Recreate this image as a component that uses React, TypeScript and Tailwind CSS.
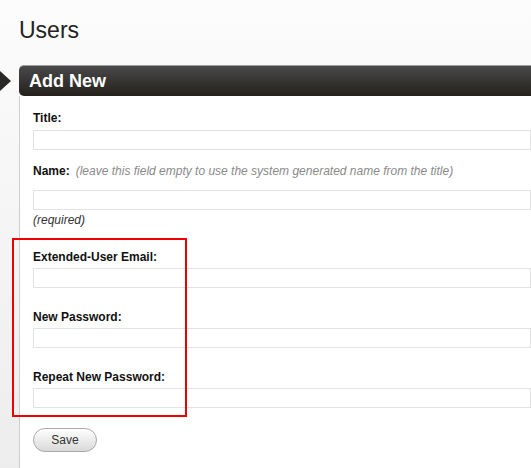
export default function App() {
    const fieldLabel = 'block h-[14px] text-[12px] leading-[14px] font-bold text-[#111]';
    const fieldInput = 'block w-full h-[20px] border border-[#e2e2e2] bg-white outline-none';

    return (
        <div
            className="relative flex h-[468px] w-[531px] flex-col overflow-hidden bg-gradient-to-b from-[#fcfcfc] to-[#ededed]"
            style={{ fontFamily: '"Liberation Sans", Arial, sans-serif' }}
        >
            {/* Page title */}
            <h1 className="mt-[17px] pl-[19px] text-[23px] leading-[26px] font-normal text-[#222]">Users</h1>

            {/* Pointer arrow */}
            <div className="absolute left-0 top-[71px] h-0 w-0 border-y-[10px] border-l-[11px] border-y-transparent border-l-[#2a2826]" />

            {/* Panel */}
            <div className="ml-[19px] mt-[22px] flex flex-1 flex-col">
                <div className="h-[31px] rounded-l-[5px] border-t border-[#9c9c9c] bg-gradient-to-b from-[#4a4a4a] to-[#24211d] pl-[10px] text-[18px] leading-[30px] font-bold text-white">
                    Add New
                </div>

                <div className="flex-1 border-l border-[#cfcfcf] bg-white pl-[13px] pt-[15px]">
                    <label className={fieldLabel}>Title:</label>
                    <input className={`${fieldInput} mt-[5px]`} />

                    <label className={`${fieldLabel} mt-[14px]`}>
                        Name:
                        <span className="ml-[6px] font-normal italic text-[#8a8a8a]">
                            (leave this field empty to use the system generated name from the title)
                        </span>
                    </label>
                    <input className={`${fieldInput} mt-[12px]`} />
                    <div className="mt-[3px] h-[14px] text-[12px] leading-[14px] italic text-[#333]">(required)</div>

                    <label className={`${fieldLabel} mt-[23px]`}>Extended-User Email:</label>
                    <input className={`${fieldInput} mt-[4px]`} />

                    <label className={`${fieldLabel} mt-[22px]`}>New Password:</label>
                    <input type="password" className={`${fieldInput} mt-[4px]`} />

                    <label className={`${fieldLabel} mt-[22px]`}>Repeat New Password:</label>
                    <input type="password" className={`${fieldInput} mt-[4px]`} />

                    <button className="mt-[20px] h-[24px] w-[64px] rounded-full border border-[#a9a9a9] bg-gradient-to-b from-white to-[#d9d9d9] text-[12px] leading-[22px] text-[#333]">
                        Save
                    </button>
                </div>
            </div>

            {/* Highlight annotation */}
            <div className="absolute left-[12px] top-[238px] h-[179px] w-[175px] border-2 border-[#ee0000]" />
        </div>
    );
}
